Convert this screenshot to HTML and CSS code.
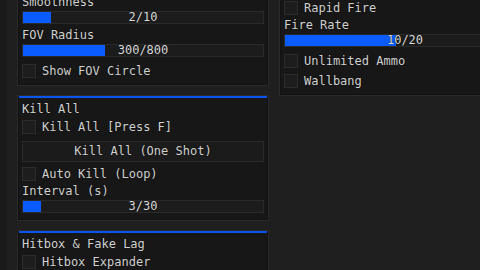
FILE: index.html
```html
<!DOCTYPE html>
<html>
<head>
<meta charset="utf-8">
<link rel="stylesheet" href="styles.css">
</head>
<body>
<div class="app">
  <div class="edge"></div>
  <div class="col col-left">
    <section class="panel">
      <div class="label">Smoothness</div>
      <div class="slider"><div class="fill" style="width:28px"></div><span class="val">2/10</span></div>
      <div class="label">FOV Radius</div>
      <div class="slider"><div class="fill" style="width:82px"></div><span class="val">300/800</span></div>
      <div class="check"><span class="box"></span><span>Show FOV Circle</span></div>
    </section>
    <section class="panel">
      <div class="bar"></div>
      <div class="title">Kill All</div>
      <div class="check"><span class="box"></span><span>Kill All [Press F]</span></div>
      <div class="btn">Kill All (One Shot)</div>
      <div class="check"><span class="box"></span><span>Auto Kill (Loop)</span></div>
      <div class="label">Interval (s)</div>
      <div class="slider"><div class="fill" style="width:18px"></div><span class="val">3/30</span></div>
    </section>
    <section class="panel">
      <div class="bar"></div>
      <div class="title">Hitbox &amp; Fake Lag</div>
      <div class="check"><span class="box"></span><span>Hitbox Expander</span></div>
    </section>
  </div>
  <div class="col col-right">
    <section class="panel">
      <div class="check"><span class="box"></span><span>Rapid Fire</span></div>
      <div class="label">Fire Rate</div>
      <div class="slider"><div class="fill" style="width:111px"></div><span class="val">10/20</span></div>
      <div class="check"><span class="box"></span><span>Unlimited Ammo</span></div>
      <div class="check"><span class="box"></span><span>Wallbang</span></div>
    </section>
  </div>
</div>
</body>
</html>
```
FILE: styles.css
```css
html, body {
  margin: 0;
  padding: 0;
}
body {
  background: #1f1f1f;
  color: #d2d2d2;
  font-family: "DejaVu Sans Mono", monospace;
  font-size: 12px;
  line-height: 14px;
  overflow: hidden;
}
.app {
  display: flex;
  align-items: flex-start;
  width: 480px;
  height: 270px;
  overflow: hidden;
}
.edge {
  flex: none;
  width: 5px;
  height: 270px;
  background: #1b1b1b;
  border-right: 1px solid #161616;
}
.col {
  flex: none;
  width: 252px;
  display: flex;
  flex-direction: column;
  gap: 9px;
}
.col-left {
  margin: -9px 0 0 11px;
}
.col-right {
  margin: -4px 0 0 10px;
}
.panel {
  background: #171717;
  border: 1px solid #2a2a2a;
  box-shadow: inset 0 0 0 1px #121212;
  padding: 4px 4px 7px;
  display: flex;
  flex-direction: column;
  gap: 4px;
  text-shadow: 0 0 1px #000;
}
.bar {
  height: 2px;
  margin: -4px -3px 0;
  background: #0a55f0;
}
.title {
  line-height: 14px;
}
.label {
  line-height: 13px;
  margin-bottom: -2px;
}
.slider {
  position: relative;
  height: 11px;
  border: 1px solid #2a2a2a;
  background: #1c1c1c;
}
.slider + .label {
  margin-top: 1px;
}
.slider + .check {
  margin-top: 3px;
}
.fill {
  height: 100%;
  background: #0a5cff;
}
.val {
  position: absolute;
  left: 0;
  right: 0;
  top: 0;
  text-align: center;
  line-height: 11px;
  color: #dcdcdc;
}
.check {
  display: flex;
  align-items: center;
  gap: 6px;
  height: 14px;
  line-height: 14px;
}
.check + .check {
  margin-top: 2px;
}
.box {
  flex: none;
  width: 12px;
  height: 12px;
  background: #1d1d1d;
  border: 1px solid #2c2c2c;
}
.btn {
  height: 19px;
  line-height: 19px;
  margin: 3px 0 1px;
  text-align: center;
  background: #1b1b1b;
  border: 1px solid #2a2a2a;
}
```
